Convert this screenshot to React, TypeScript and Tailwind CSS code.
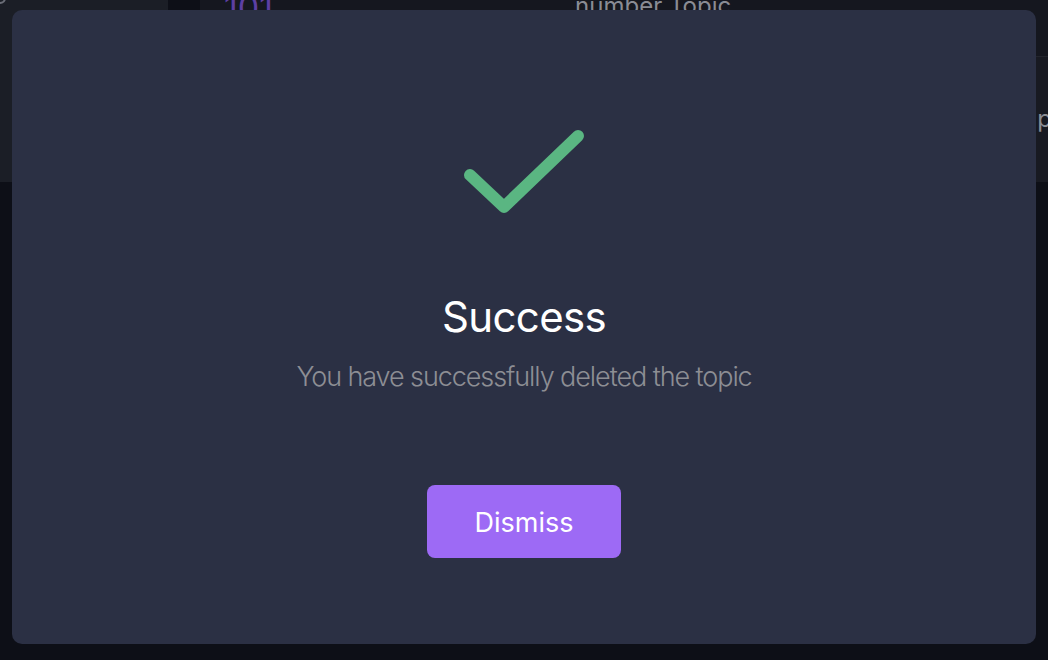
import React from "react";

const sans = { fontFamily: "Inter, 'Liberation Sans', sans-serif" };

function CheckMark() {
  return (
    <svg width="140" height="105" viewBox="0 0 140 105" fill="none">
      <path
        d="M16 55 L50 87 L124 16"
        stroke="#5ab682"
        strokeWidth="12"
        strokeLinecap="round"
        strokeLinejoin="round"
      />
    </svg>
  );
}

export default function App() {
  return (
    <div
      className="relative h-[660px] w-[1048px] overflow-hidden bg-[#0d0f17]"
      style={sans}
    >
      {/* page behind the dialog */}
      <div className="flex h-[182px]">
        <div className="w-[168px] bg-[#1b1e26]">
          <div className="-ml-[6px] -mt-[8px] h-[12px] w-[12px] rounded-full border-2 border-[#6b6e78]" />
        </div>
        <div className="w-[32px]" />
        <div className="flex flex-1 flex-col">
          <div className="flex h-[57px] items-start border-b border-[#23252d] bg-[#15171f]">
            <span className="ml-[24px] -mt-[18px] text-[34px] text-[#5d3fa3]">101</span>
            <span className="ml-[302px] -mt-[12px] text-[24px] text-[#8a8c94]">number Topic</span>
          </div>
          <div className="flex flex-1 justify-end bg-[#181a22]">
            <span className="mt-[44px] -mr-[4px] text-[24px] text-[#8a8c94]">p</span>
          </div>
        </div>
      </div>

      {/* dialog */}
      <div className="absolute left-[12px] top-[10px] flex h-[634px] w-[1024px] flex-col items-center rounded-[10px] bg-[#2b3044] pt-[110px]">
        <CheckMark />
        <h2 className="mt-[71px] text-[42px] leading-none font-normal tracking-[-0.015em] text-white">
          Success
        </h2>
        <p className="mt-[25px] text-[27px] leading-none font-light tracking-[-0.04em] text-[#8d8e94]">
          You have successfully deleted the topic
        </p>
        <button className="mt-[95px] flex h-[73px] w-[194px] items-center justify-center rounded-[8px] bg-[#9d6af5] pt-[3px] text-[27px] text-white">
          Dismiss
        </button>
      </div>
    </div>
  );
}
